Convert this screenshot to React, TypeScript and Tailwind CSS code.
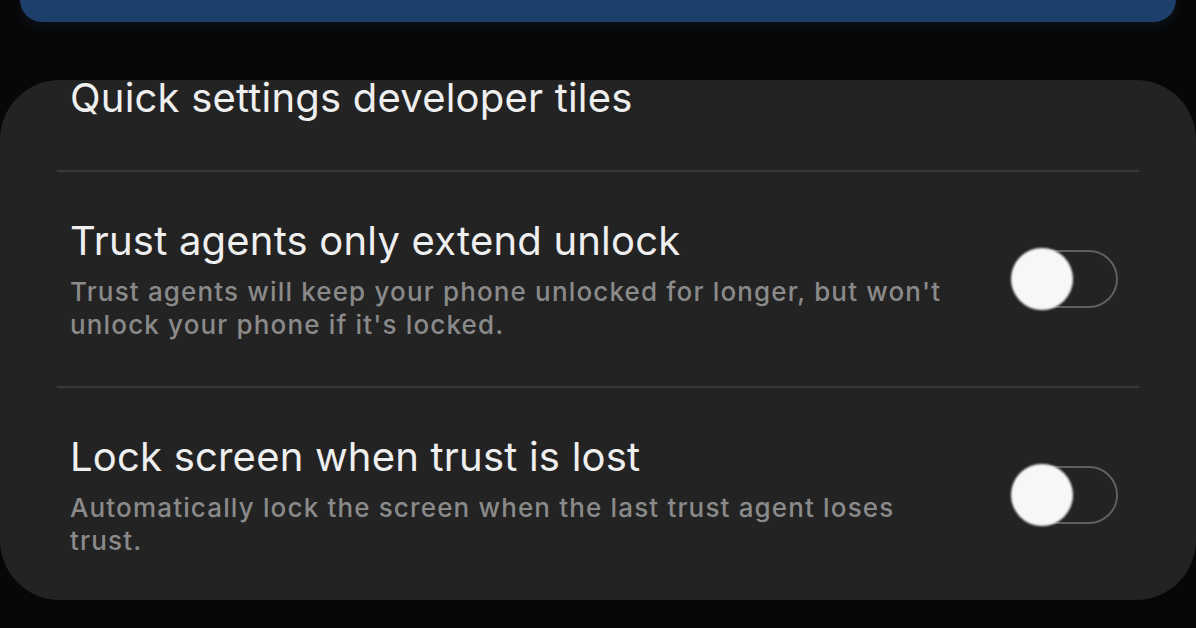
import React from "react";

type Row = {
  title: string;
  summary: string;
  on: boolean;
};

const rows: Row[] = [
  {
    title: "Trust agents only extend unlock",
    summary: "Trust agents will keep your phone unlocked for longer, but won't unlock your phone if it's locked.",
    on: false,
  },
  {
    title: "Lock screen when trust is lost",
    summary: "Automatically lock the screen when the last trust agent loses trust.",
    on: false,
  },
];

function Toggle({ on }: { on: boolean }) {
  return (
    <div className="relative h-[58px] w-[106px] shrink-0">
      <div className="absolute inset-0 rounded-full border-2 border-[#5f5f5f]" />
      <div
        className={
          on
            ? "absolute right-[-2px] top-1/2 h-[62px] w-[62px] -translate-y-1/2 rounded-full bg-white"
            : "absolute left-[-1px] top-1/2 h-[62px] w-[62px] -translate-y-1/2 rounded-full bg-[#f7f7f7] blur-[1px]"
        }
      />
    </div>
  );
}

export default function App() {
  return (
    <div
      className="h-[628px] w-[1196px] overflow-hidden bg-[#070707]"
      style={{ fontFamily: "Inter, 'Noto Sans', sans-serif" }}
    >
      {/* bottom of the previous section */}
      <div className="mx-[20px] h-[22px] rounded-b-[60px] bg-[#1d3f6c] shadow-[0_4px_14px_rgba(30,60,100,0.25)]" />

      <div className="mt-[58px] h-[520px] rounded-[60px] bg-[#232323]">
        <div className="flex h-[90px] items-start pl-[70px]">
          <div className="text-[40px] leading-[36px] tracking-[0.2px] text-[#efefef]">Quick settings developer tiles</div>
        </div>

        {rows.map((row) => (
          <div key={row.title}>
            <div className="mx-[57px] h-[2px] bg-[#393939]" />
            <div className="flex h-[214px] items-center pl-[70px] pr-[78px]">
              <div className="flex-1">
                <div className="text-[40px] leading-[46px] tracking-[0.2px] text-[#efefef]">{row.title}</div>
                <div className="mt-[11px] max-w-[880px] text-[26px] font-medium leading-[33px] tracking-[1.15px] text-[#8a8a8a]">
                  {row.summary}
                </div>
              </div>
              <Toggle on={row.on} />
            </div>
          </div>
        ))}
      </div>
    </div>
  );
}
